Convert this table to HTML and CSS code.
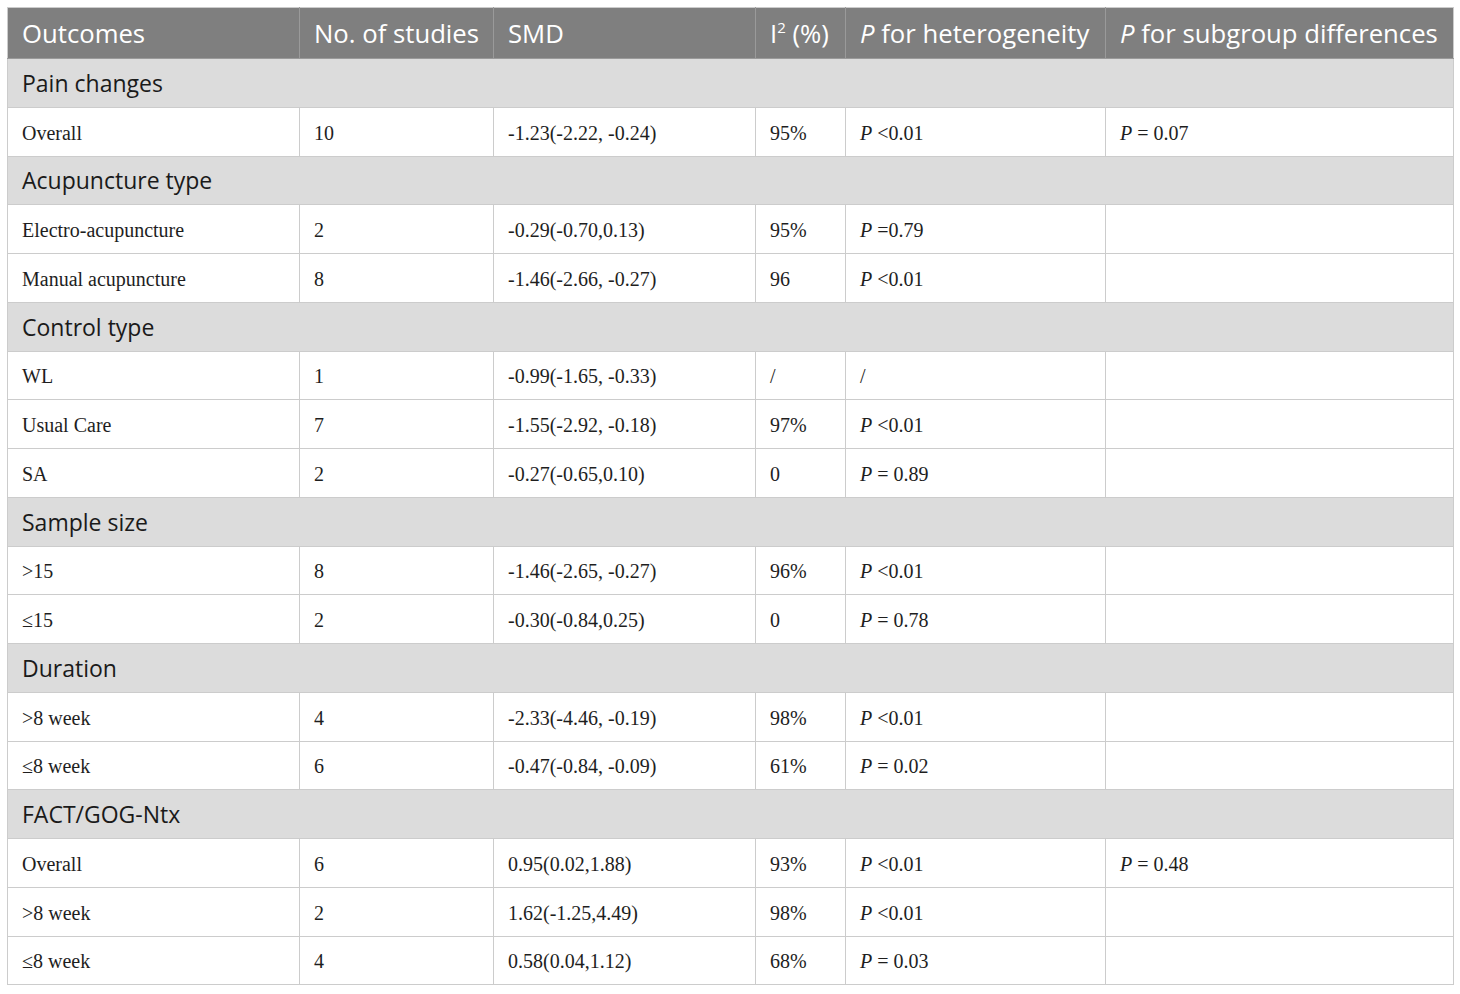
FILE: index.html
```html
<!DOCTYPE html>
<html>
<head>
<meta charset="utf-8">
<link rel="stylesheet" href="styles.css">
</head>
<body>
<table class="tbl">
  <colgroup>
    <col class="c1"><col class="c2"><col class="c3"><col class="c4"><col class="c5"><col class="c6">
  </colgroup>
  <thead>
    <tr class="head">
      <th>Outcomes</th>
      <th>No. of studies</th>
      <th>SMD</th>
      <th>I<sup>2</sup> (%)</th>
      <th><i>P</i> for heterogeneity</th>
      <th><i>P</i> for subgroup differences</th>
    </tr>
  </thead>
  <tbody>
    <tr class="sec"><td colspan="6">Pain changes</td></tr>
    <tr><td>Overall</td><td>10</td><td>-1.23(-2.22, -0.24)</td><td>95%</td><td><i>P</i> &lt;0.01</td><td><i>P</i> = 0.07</td></tr>
    <tr class="sec"><td colspan="6">Acupuncture type</td></tr>
    <tr><td>Electro-acupuncture</td><td>2</td><td>-0.29(-0.70,0.13)</td><td>95%</td><td><i>P</i> =0.79</td><td></td></tr>
    <tr><td>Manual acupuncture</td><td>8</td><td>-1.46(-2.66, -0.27)</td><td>96</td><td><i>P</i> &lt;0.01</td><td></td></tr>
    <tr class="sec"><td colspan="6">Control type</td></tr>
    <tr><td>WL</td><td>1</td><td>-0.99(-1.65, -0.33)</td><td>/</td><td>/</td><td></td></tr>
    <tr><td>Usual Care</td><td>7</td><td>-1.55(-2.92, -0.18)</td><td>97%</td><td><i>P</i> &lt;0.01</td><td></td></tr>
    <tr><td>SA</td><td>2</td><td>-0.27(-0.65,0.10)</td><td>0</td><td><i>P</i> = 0.89</td><td></td></tr>
    <tr class="sec"><td colspan="6">Sample size</td></tr>
    <tr><td>&gt;15</td><td>8</td><td>-1.46(-2.65, -0.27)</td><td>96%</td><td><i>P</i> &lt;0.01</td><td></td></tr>
    <tr><td>≤15</td><td>2</td><td>-0.30(-0.84,0.25)</td><td>0</td><td><i>P</i> = 0.78</td><td></td></tr>
    <tr class="sec"><td colspan="6">Duration</td></tr>
    <tr><td>&gt;8 week</td><td>4</td><td>-2.33(-4.46, -0.19)</td><td>98%</td><td><i>P</i> &lt;0.01</td><td></td></tr>
    <tr><td>≤8 week</td><td>6</td><td>-0.47(-0.84, -0.09)</td><td>61%</td><td><i>P</i> = 0.02</td><td></td></tr>
    <tr class="sec"><td colspan="6">FACT/GOG-Ntx</td></tr>
    <tr><td>Overall</td><td>6</td><td>0.95(0.02,1.88)</td><td>93%</td><td><i>P</i> &lt;0.01</td><td><i>P</i> = 0.48</td></tr>
    <tr><td>&gt;8 week</td><td>2</td><td>1.62(-1.25,4.49)</td><td>98%</td><td><i>P</i> &lt;0.01</td><td></td></tr>
    <tr><td>≤8 week</td><td>4</td><td>0.58(0.04,1.12)</td><td>68%</td><td><i>P</i> = 0.03</td><td></td></tr>
  </tbody>
</table>
</body>
</html>
```

FILE: styles.css
```css
html, body {
  margin: 0;
  padding: 0;
  background: #ffffff;
}

body {
  padding: 7px 0 0 7px;
}

.tbl {
  border-collapse: collapse;
  table-layout: fixed;
  width: 1446px;
  border: 1px solid #cccccc;
}

.c1 { width: 292px; }
.c2 { width: 194px; }
.c3 { width: 262px; }
.c4 { width: 90px; }
.c5 { width: 260px; }
.c6 { width: 348px; }

.tbl th,
.tbl td {
  border: 1px solid #cccccc;
  padding: 0 0 0 14px;
  text-align: left;
  vertical-align: middle;
  white-space: nowrap;
}

.head {
  height: 51px;
}

.head th {
  background: #7f7f7f;
  color: #ffffff;
  font-family: "Open Sans", "Noto Sans", sans-serif;
  font-weight: 400;
  font-size: 25.7px;
  border-color: #9a9a9a;
  border-top-color: #cccccc;
}

.head th:first-child { border-left-color: #cccccc; }
.head th:last-child { border-right-color: #cccccc; }

.head sup {
  font-size: 15px;
  vertical-align: 10px;
  line-height: 0;
}

.tbl tbody tr {
  height: 48.75px;
}

.tbl td {
  font-family: "Liberation Serif", "Times New Roman", serif;
  font-size: 20px;
  color: #1e1e1e;
  padding-top: 3px;
}

.tbl tr.sec td {
  background: #dcdcdc;
  font-family: "Open Sans", "Noto Sans", sans-serif;
  font-size: 23px;
  color: #1a1a1a;
  padding-top: 0;
}
```
